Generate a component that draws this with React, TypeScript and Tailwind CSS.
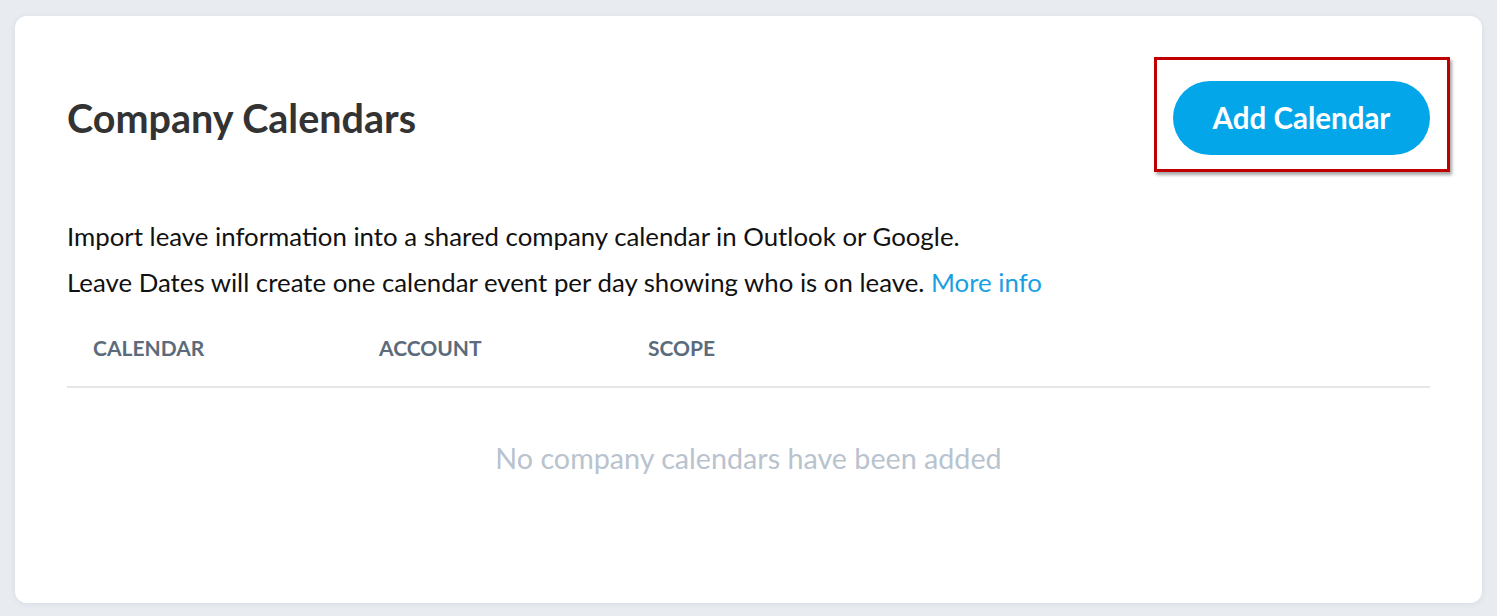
export default function App() {
  return (
    <div className="min-h-screen bg-[#e8ecf1] px-[15px] pt-[16px] pb-[13px] font-['Lato',sans-serif]">
      <div className="h-[587px] rounded-[12px] bg-white px-[52px] pt-[65px] shadow-[0_1px_6px_rgba(30,50,80,0.08)]">
        <div className="flex items-center justify-between">
          <h1 className="text-[39.5px] font-bold text-[#333]">Company Calendars</h1>
          <div className="relative">
            <div className="pointer-events-none absolute -top-[24px] -right-[20px] -bottom-[17px] -left-[19px] border-[3px] border-[#c00000] shadow-[2px_3px_3px_rgba(0,0,0,0.35)]" />
            <button
              type="button"
              className="h-[74px] w-[257px] rounded-full bg-[#04a6ea] text-[29.5px] font-bold text-white"
            >
              Add Calendar
            </button>
          </div>
        </div>

        <div className="mt-[63px] space-y-[10px] text-[25.8px] leading-[36px] text-[#111]">
          <p>Import leave information into a shared company calendar in Outlook or Google.</p>
          <p>
            Leave Dates will create one calendar event per day showing who is on leave.{' '}
            <a href="#" className="text-[#1a9fe3]">More info</a>
          </p>
        </div>

        <div className="mt-[32px] flex border-b-2 border-[#e6e6e6] pb-[22px] pl-[26px] text-[21px] leading-[32px] font-bold text-[#5b6b7c]">
          <div className="w-[286px]">CALENDAR</div>
          <div className="w-[269px]">ACCOUNT</div>
          <div>SCOPE</div>
        </div>

        <p className="mt-[49px] text-center text-[28.7px] leading-[43px] text-[#b9c3ce]">No company calendars have been added</p>
      </div>
    </div>
  );
}
